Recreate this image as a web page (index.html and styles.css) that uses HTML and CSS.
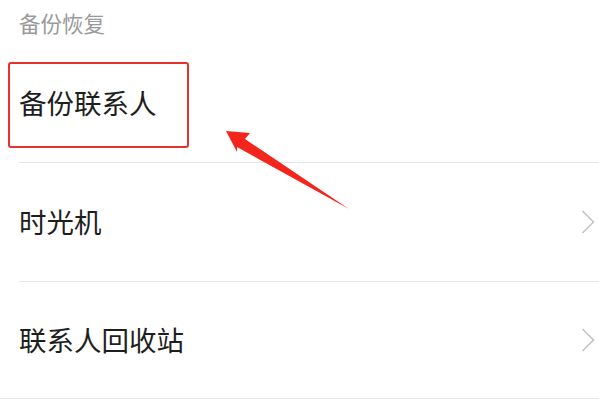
FILE: index.html
```html
<!DOCTYPE html>
<html lang="zh">
<head>
<meta charset="utf-8">
<link rel="stylesheet" href="styles.css">
</head>
<body>
<div class="page">
  <div class="section-title">备份恢复</div>
  <div class="row">
    <span class="label">备份联系人</span>
  </div>
  <div class="row">
    <span class="label">时光机</span>
    <svg class="chev" width="14" height="24" viewBox="0 0 14 24"><path d="M1.5 1 L12.5 12 L1.5 23" fill="none" stroke="#c4c4c4" stroke-width="1.6"/></svg>
  </div>
  <div class="row last">
    <span class="label">联系人回收站</span>
    <svg class="chev" width="14" height="24" viewBox="0 0 14 24"><path d="M1.5 1 L12.5 12 L1.5 23" fill="none" stroke="#c4c4c4" stroke-width="1.6"/></svg>
  </div>
  <div class="highlight"></div>
  <svg class="arrow" width="599" height="400" viewBox="0 0 599 400">
    <polygon points="226,131 250,133 245,139 349,209 237,147 237,152" fill="#f2261c"/>
  </svg>
</div>
</body>
</html>
```
FILE: styles.css
```css
html, body {
  margin: 0;
  padding: 0;
  background: #ffffff;
}
.page {
  position: relative;
  width: 599px;
  height: 400px;
  overflow: hidden;
  font-family: "Noto Sans CJK SC", "Noto Sans", sans-serif;
}
.section-title {
  height: 44px;
  display: flex;
  align-items: center;
  padding-left: 19px;
  font-size: 21.5px;
  color: #9a9a9a;
}
.row {
  height: 118px;
  margin-left: 19px;
  border-bottom: 1px solid #e6e6e6;
  display: flex;
  align-items: center;
  justify-content: space-between;
  padding-right: 4px;
}
.row.last {
  height: 116px;
  margin-left: 0;
  padding-left: 19px;
}
.label {
  font-size: 27.5px;
  color: #1e1e1e;
  line-height: 1;
}
.chev {
  display: block;
}
.highlight {
  position: absolute;
  left: 8px;
  top: 62px;
  width: 177px;
  height: 82px;
  border: 2px solid #e5332b;
  border-radius: 3px;
}
.arrow {
  position: absolute;
  left: 0;
  top: 0;
}
```
